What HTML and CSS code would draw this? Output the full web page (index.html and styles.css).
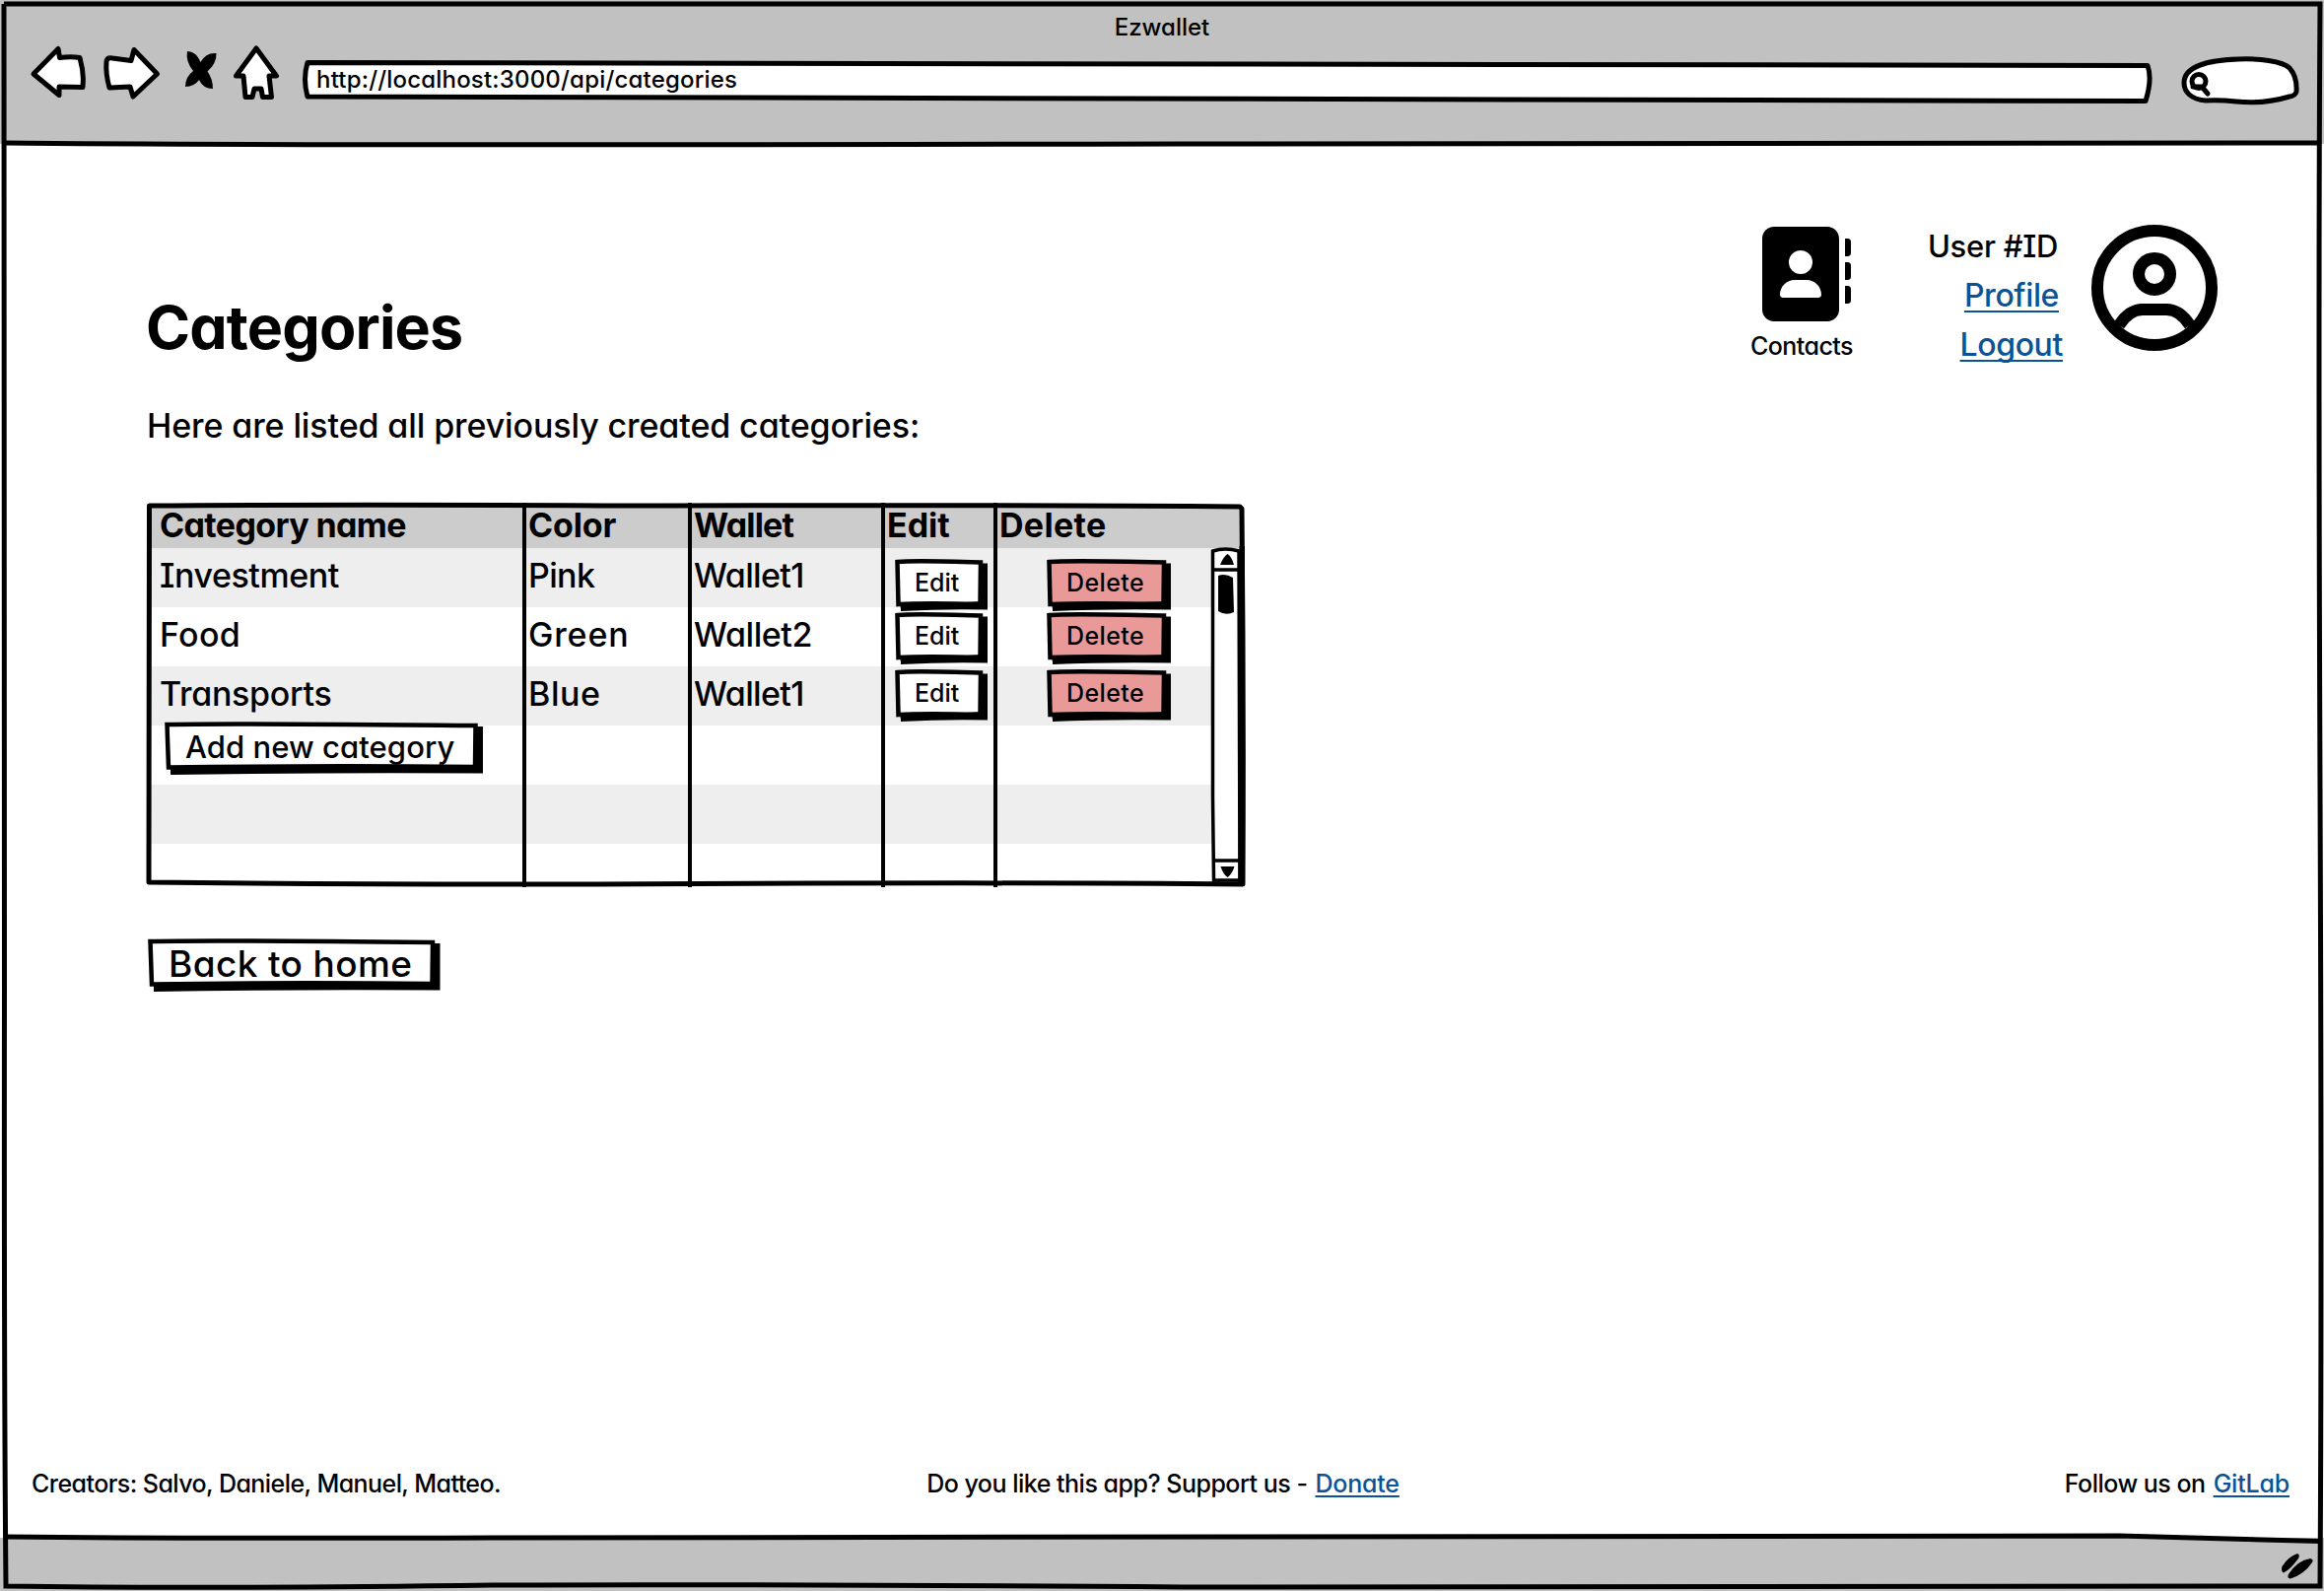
FILE: index.html
```html
<!DOCTYPE html>
<html lang="en">
<head>
<meta charset="utf-8">
<title>Ezwallet</title>
<link rel="stylesheet" href="styles.css">
</head>
<body>
<svg class="defs" aria-hidden="true">
  <symbol id="edit-box" viewBox="0 0 94 53">
    <path d="M6 43H89V4.500H94V51.500Q50 50.500 6 53Z"/>
    <path class="face" d="M2.500 3Q20 1.500 87 3.500L86.500 46Q30 44.500 3.500 46Z"/>
    <path d="M5 44.500Q40 46 88 43V51H6ZM85 5H91V48H85Z"/>
  </symbol>
  <symbol id="delete-box" viewBox="0 0 127 53">
    <path d="M6 43H121V4.500H126V51.500Q60 50.500 6 53Z"/>
    <path class="face" d="M2.500 3Q25 1.500 119 3.500L118.500 46Q40 44.500 3.500 46Z"/>
    <path d="M5 44.500Q60 46 120 43V51H6ZM117.500 5H123V48H117.500Z"/>
  </symbol>
</svg>
<div class="window">
  <header class="chrome">
    <div class="window-title"><span>Ezwallet</span></div>
    <div class="toolbar">
      <svg class="nav-icons" viewBox="0 0 260 60">
        <path class="ink fill" d="M4 35L29 9.500L30.500 18.500Q42 17 51 18.500L53.500 30Q55 40 54 48.500L30 48V56.500Z"/>
        <path class="ink fill" d="M78 22Q79 18 84 19L103 21.500L106 10.500L129.500 35L105 58L102 48L81 49Q77 35 78 22Z"/>
        <path d="M160 12Q169 12 173.500 23Q179 13 189.500 14Q190 24 180.500 32.500Q186 40 186 50Q176 50 172 41Q167 48 158 48Q158 38 166 32Q158 22 160 12Z"/>
        <path class="ink fill" d="M230 9L250.500 37H243L245.500 58.500H236.500L235 50H228L226 58.500L219 58.500L217 37H209.500Z"/>
      </svg>
      <div class="address">
        <svg class="backdrop" viewBox="0 0 1876 46"><path class="ink fill" d="M5 3.500Q600 2 1872 6.500Q1877 20 1870 42.500Q900 43 5 38Q0 20 5 3.500Z"/></svg>
        <span class="url">http://localhost:3000/api/categories</span>
      </div>
      <svg class="search" viewBox="0 0 124 56">
        <path class="ink fill" d="M27 46C12 45 5 37 5 28C5 12 28 5 60 4C80 3 105 6 112 13Q120 22 119 37Q118 41 112 42Q85 50 58 47Q40 45 27 46Z"/>
        <circle class="ink" cx="20" cy="26.500" r="7"/><path class="ink" d="M14 32H23L29 39"/>
      </svg>
    </div>
  </header>
  <main class="page">
    <section class="content">
      <h1><span>Categories</span></h1>
      <p class="intro"><span>Here are listed all previously created categories:</span></p>
      <div class="table">
        <div class="row head"><div><span class="tight-6">Category name</span></div><div><span class="tight-2">Color</span></div><div><span class="tight-8">Wallet</span></div><div><span>Edit</span></div><div><span class="loose-3">Delete</span></div></div>
        <div class="row r1"><div><span class="tight-4">Investment</span></div><div><span class="tight-6">Pink</span></div><div><span class="tight-6">Wallet1</span></div>
          <div><button class="btn edit"><svg class="backdrop"><use href="#edit-box"/></svg><span>Edit</span></button></div>
          <div><button class="btn delete"><svg class="backdrop"><use href="#delete-box"/></svg><span>Delete</span></button></div></div>
        <div class="row r2"><div><span class="loose-3">Food</span></div><div><span class="loose-8">Green</span></div><div><span class="tight-4">Wallet2</span></div>
          <div><button class="btn edit"><svg class="backdrop"><use href="#edit-box"/></svg><span>Edit</span></button></div>
          <div><button class="btn delete"><svg class="backdrop"><use href="#delete-box"/></svg><span>Delete</span></button></div></div>
        <div class="row r3"><div><span class="tight-3">Transports</span></div><div><span class="loose-5">Blue</span></div><div><span class="tight-6">Wallet1</span></div>
          <div><button class="btn edit"><svg class="backdrop"><use href="#edit-box"/></svg><span>Edit</span></button></div>
          <div><button class="btn delete"><svg class="backdrop"><use href="#delete-box"/></svg><span>Delete</span></button></div></div>
        <div class="row r4"><div><button class="btn add"><svg class="backdrop" viewBox="0 0 323 54"><path d="M6 44H318V5H323V52.500Q160 51.500 6 54Z"/><path class="face" d="M2.500 3Q60 1.500 315.500 4L315 46Q160 44.500 4 46.500Z"/><path d="M6 45.500Q160 43.500 316 44V51H6ZM314 5H320V48H314Z"/></svg><span>Add new category</span></button></div><div></div><div></div><div></div><div></div></div>
        <div class="row r5"><div></div><div></div><div></div><div></div><div></div></div>
        <div class="row r6"><div></div><div></div><div></div><div></div><div></div></div>
        <svg class="table-lines" viewBox="0 0 1116 392">
          <path class="scroll" d="M1082.500 50Q1095 46 1109 50L1110 384H1083.500L1082.500 300Z"/>
          <path class="scroll" d="M1082 69H1110M1082 364H1110"/>
          <path d="M1097.500 53Q1102 56 1104 64H1090Q1093 56 1097.500 53ZM1090.500 370H1104.500Q1102 378 1097.500 381Q1093 378 1090.500 370Z"/>
          <path d="M1088 75Q1095 72 1103 77L1104 112Q1096 116 1088 111Z"/>
          <path d="M384 1V391M552 1V391M748 1V391M862 1V391" class="divider"/>
          <path class="outline" d="M3.500 4Q200 2.500 500 4Q900 3 1110 5L1112 7Q1114 200 1113 388Q900 386 560 387.500Q250 389 3 386Q2.500 200 3.500 4Z"/>
          <path d="M1109.500 45H1115V389H1108.500Z"/>
        </svg>
      </div>
      <button class="btn back"><svg class="backdrop" viewBox="0 0 297 54"><path d="M6 44H291.500V5H296.500V52.500Q140 51.500 6 54Z"/><path class="face" d="M2.500 3Q60 1.500 289 4L288.500 46Q140 44.500 4 46.500Z"/><path d="M6 45.500Q140 44 290 44V51H6ZM287.500 5H293V48H287.500Z"/></svg><span class="loose-4">Back to home</span></button>
    </section>
    <aside class="account">
      <div class="contacts">
        <svg class="book" viewBox="32 0 480 512"><path d="M96 0C60.700 0 32 28.700 32 64V448c0 35.300 28.700 64 64 64H384c35.300 0 64-28.700 64-64V64c0-35.300-28.700-64-64-64H96zM208 288h64c44.200 0 80 35.800 80 80c0 8.800-7.200 16-16 16H144c-8.800 0-16-7.200-16-16c0-44.200 35.800-80 80-80zm-32-96a64 64 0 1 1 128 0a64 64 0 1 1-128 0zM480 64h16c8.800 0 16 7.200 16 16v64c0 8.800-7.200 16-16 16h-16zM480 192h16c8.800 0 16 7.200 16 16v64c0 8.800-7.200 16-16 16h-16zM480 320h16c8.800 0 16 7.200 16 16v64c0 8.800-7.200 16-16 16h-16z" fill-rule="evenodd"/></svg>
        <span>Contacts</span>
      </div>
      <div class="links"><span class="user">User #ID</span><a class="profile"><span>Profile</span></a><a class="logout"><span>Logout</span></a></div>
      <svg class="avatar" viewBox="0 0 128 128"><circle cx="64" cy="64" r="58"/><circle cx="64" cy="50" r="16"/><path d="M28 102C35 91 43 86 52 86H76C85 86 93 91 100 102"/></svg>
    </aside>
    <footer class="footer">
      <p class="creators"><span>Creators: Salvo, Daniele, Manuel, Matteo.</span></p>
      <p class="support"><span>Do you like this app? Support us -</span><a><span>Donate</span></a></p>
      <p class="follow"><span>Follow us on</span><a><span>GitLab</span></a></p>
    </footer>
  </main>
  <div class="status"><svg class="grip" viewBox="0 0 34 28"><path d="M17 1Q20 2 18 6Q10 17 3 20.500Q0 19 1.500 14Q8 4 17 1ZM30 6Q34 7 32 10Q24 22 10 26.500Q6 26 8 22Q17 8 30 6Z"/></svg></div>
  <svg class="frame" viewBox="0 0 2358 1614">
    <path d="M4 4Q800 2 1200 4T2354 4Q2352 300 2354 800T2354 1609Q1800 1608 1200 1610Q800 1607 500 1608Q200 1612 6 1609Q4 1400 4.500 1000T4 4"/>
    <path d="M4 145Q300 148 1200 146T2354 145M5 1559Q200 1561 500 1560Q1300 1557 2150 1558Q2260 1561 2354 1563.500"/>
  </svg>
</div>
</body>
</html>
```
FILE: styles.css
```css
* { box-sizing: border-box; }
body { margin: 0; background: #fff; color: #000; font: 500 34px/40px Inter, "Noto Sans", sans-serif; font-feature-settings: "cv11", "cv08"; }
h1, p { margin: 0; }
svg { display: block; overflow: visible; }
span { white-space: nowrap; }
.defs { position: absolute; width: 0; height: 0; }
.window { position: relative; width: 2358px; height: 1614px; display: flex; flex-direction: column; overflow: hidden; }
.frame { position: absolute; inset: 0; fill: none; stroke: #000; stroke-width: 5; pointer-events: none; }
.ink { fill: none; stroke: #000; stroke-width: 5; stroke-linejoin: round; stroke-linecap: round; }
.ink.fill { fill: #fff; }
.backdrop { position: absolute; inset: 0; width: 100%; height: 100%; z-index: -1; }

/* Letter spacing steps, in tenths of a pixel */
.tight-8 { letter-spacing: -.84px; }
.tight-6 { letter-spacing: -.63px; }
.tight-4 { letter-spacing: -.43px; }
.tight-3 { letter-spacing: -.3px; }
.tight-2 { letter-spacing: -.17px; }
.loose-3 { letter-spacing: .3px; }
.loose-4 { letter-spacing: .38px; }
.loose-5 { letter-spacing: .55px; }
.loose-8 { letter-spacing: .85px; }

.chrome { height: 146px; padding: 4px; background: #c1c1c1; flex: none; }
.window-title { height: 46px; line-height: 48px; text-align: center; font-size: 24px; }
.toolbar { display: flex; align-items: flex-start; padding-left: 26px; }
.nav-icons { width: 260px; height: 60px; margin-top: -10px; flex: none; }
.address { position: relative; isolation: isolate; width: 1876px; height: 46px; margin: 10px 0 0 17px; padding-left: 14px; font-size: 24px; line-height: 42px; letter-spacing: .19px; flex: none; }
.search { width: 124px; height: 56px; margin: 6px 0 0 28px; flex: none; }

.page { flex: 1; display: grid; grid-template: 1fr 96px / 1fr 640px; }
.content { padding: 150px 0 0 149px; }
h1 { margin-left: -1px; font-size: 61px; line-height: 72px; font-weight: 700; letter-spacing: -.86px; }
.intro { margin-top: 44px; letter-spacing: -.11px; }
.table { position: relative; width: 1116px; height: 392px; margin-top: 57px; padding: 4px; }
.row { height: 60px; display: grid; grid-template-columns: 380px 168px 196px 114px 246px; line-height: 56px; }
.row > div { padding-left: 3px; }
.row > div:first-child { padding-left: 9px; }
.head { height: 43px; background: #ccc; font-weight: 700; line-height: 39px; }
.r1, .r3, .r5 { background: #eee; }
.r6 { height: 40px; }
.table-lines { position: absolute; top: 0; left: -1px; width: 1116px; height: 392px; }
.table-lines .outline { fill: none; stroke: #000; stroke-width: 5; stroke-linejoin: round; }
.divider { stroke: #000; stroke-width: 4; }
.scroll { fill: #fff; stroke: #000; stroke-width: 3.5; }

.btn { position: relative; z-index: 1; isolation: isolate; display: block; border: 0; padding: 0 0 4px; background: none; color: inherit; font: inherit; font-feature-settings: inherit; text-align: left; }
.face { fill: var(--face, #fff); stroke: #000; stroke-width: 4.5; }
.edit, .delete { height: 53px; font-size: 25px; line-height: 43px; margin-top: 11px; }
.edit { width: 94px; margin-left: 8px; padding-left: 20px; }
.delete { --face: #ea9999; width: 127px; margin-left: 48px; padding-left: 20px; letter-spacing: .4px; }
.r2 .btn { margin-top: 5px; }
.r3 .btn { margin-top: 3px; }
.add { width: 323px; height: 54px; margin: -4px 0 0 5px; padding-left: 21px; font-size: 31px; line-height: 47px; letter-spacing: .06px; }
.back { width: 297px; height: 54px; margin: 51px 0 0 1px; padding-left: 21px; font-size: 37px; line-height: 47px; }

.account { display: flex; align-items: flex-start; padding-top: 82px; }
.contacts { width: 110px; margin: 2px 0 0 58px; font-size: 25px; line-height: 50px; letter-spacing: -.56px; }
.book { width: 90px; height: 96px; margin-left: 12px; }
.links { width: 140px; margin: -3px 0 0 70px; display: flex; flex-direction: column; align-items: flex-end; font-size: 32px; line-height: 50px; letter-spacing: -.38px; }
.user { margin-right: 8px; font-size: 31px; letter-spacing: -.28px; }
.profile { margin-right: 7px; }
.logout { margin-right: 3px; }
.avatar { width: 128px; height: 128px; margin-left: 26px; fill: none; stroke: #000; stroke-width: 12; }
a { color: #0b5394; text-decoration: underline; text-decoration-thickness: 2px; text-underline-offset: 4px; text-decoration-skip-ink: none; }
.footer { grid-column: 1 / 3; display: grid; grid-template-columns: 1fr auto 1fr; padding: 25px 35px 0 32px; font-size: 25px; line-height: 32px; letter-spacing: -.5px; }
.creators { letter-spacing: -.56px; }
.support { margin-left: 5px; }
.follow { text-align: right; }
.footer a { margin-left: 8px; letter-spacing: -.2px; text-underline-offset: 3px; }
.status { height: 54px; flex: none; background: #c1c1c1; }
.grip { width: 34px; height: 28px; margin: 15px 0 0 2314px; }
```
